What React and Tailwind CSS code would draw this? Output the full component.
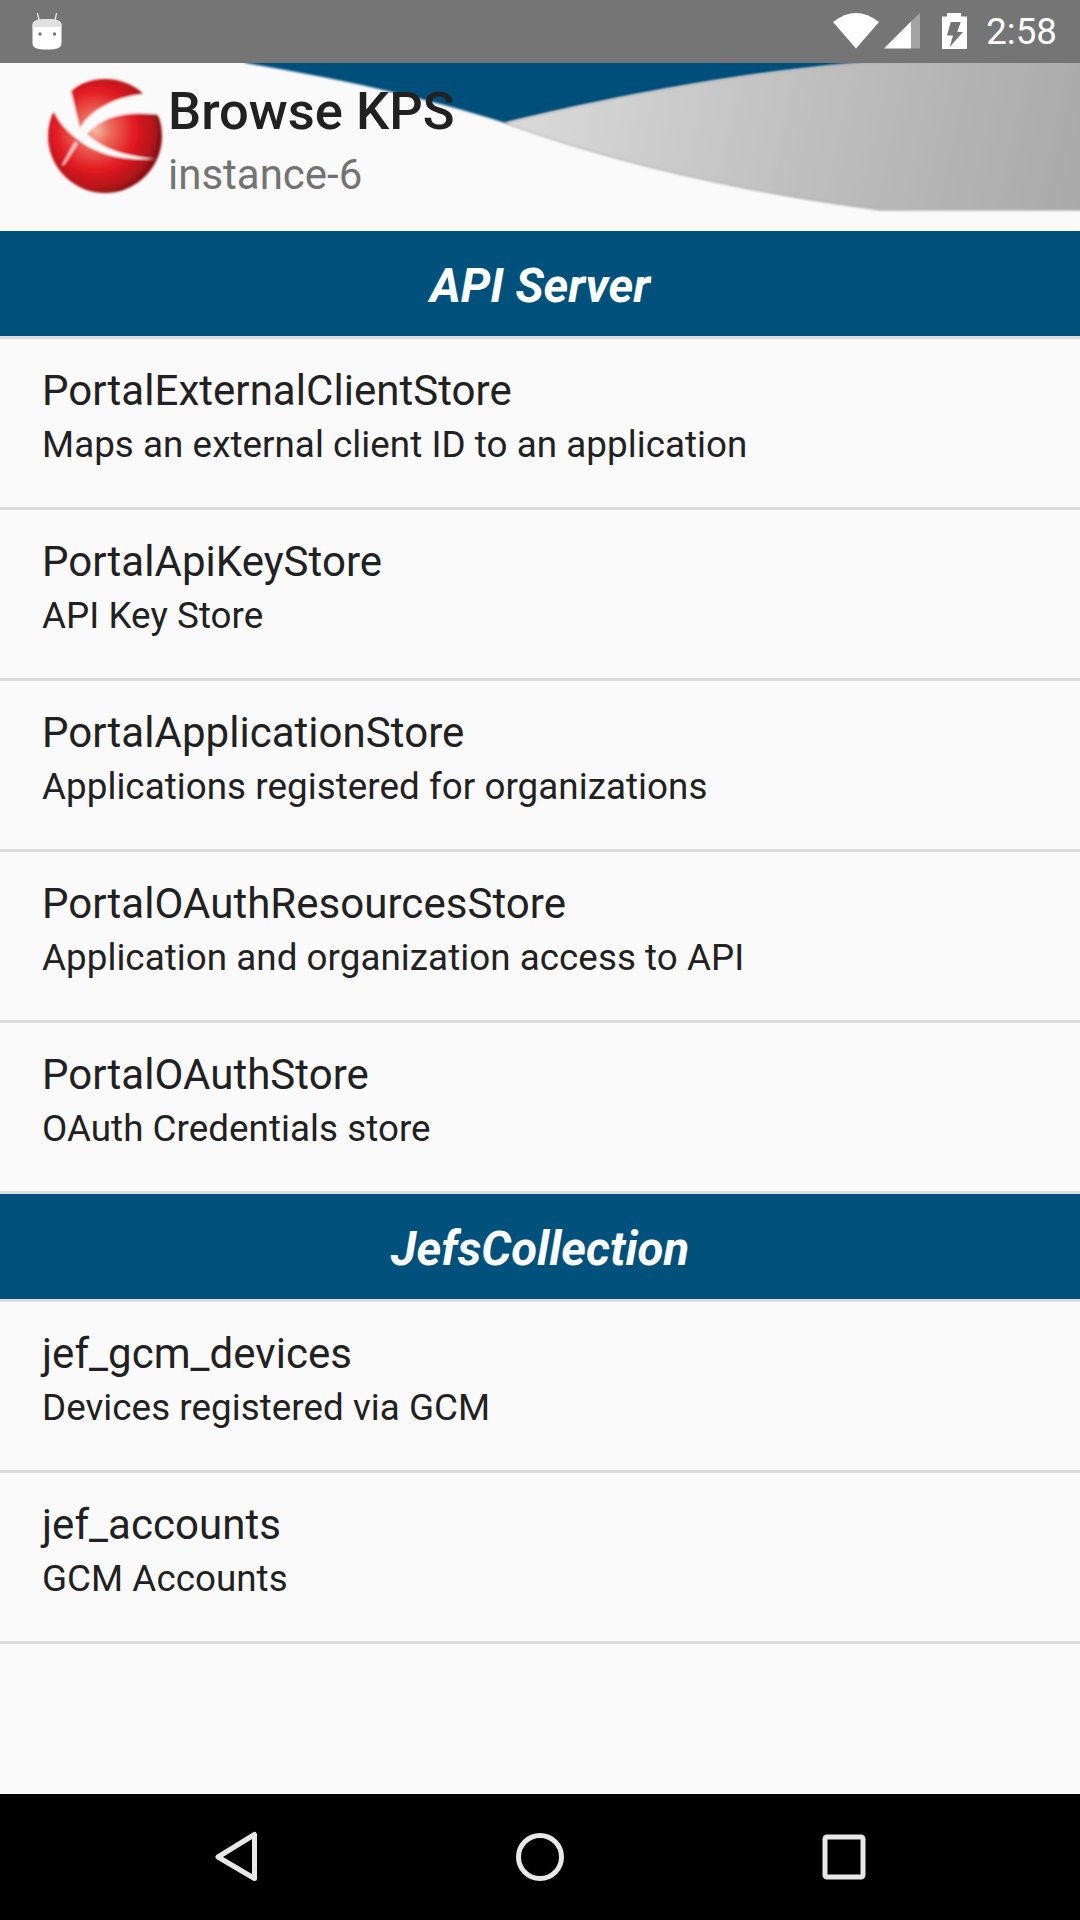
const sections = [
  {
    title: "API Server",
    items: [
      ["PortalExternalClientStore", "Maps an external client ID to an application"],
      ["PortalApiKeyStore", "API Key Store"],
      ["PortalApplicationStore", "Applications registered for organizations"],
      ["PortalOAuthResourcesStore", "Application and organization access to API"],
      ["PortalOAuthStore", "OAuth Credentials store"],
    ],
  },
  {
    title: "JefsCollection",
    items: [
      ["jef_gcm_devices", "Devices registered via GCM"],
      ["jef_accounts", "GCM Accounts"],
    ],
  },
];

function AndroidIcon() {
  return (
    <svg width="32" height="38" viewBox="0 0 32 38" className="block">
      <path d="M8 7 L6.5 0.5 M24 7 L25.5 0.5" stroke="#e4e4e4" strokeWidth="1.4" strokeLinecap="round" />
      <path d="M1.5 12 C1.5 8 6 6 16 6 C26 6 30.5 8 30.5 12 L30.5 30 C30.5 35 26 36.5 16 36.5 C6 36.5 1.5 35 1.5 30 Z" fill="#ffffff" />
      <path d="M1.5 12 C1.5 8 6 6 16 6 C26 6 30.5 8 30.5 12 L30.5 14 L1.5 14 Z" fill="#e0e0e0" />
      <circle cx="9" cy="21" r="1.7" fill="#757575" />
      <circle cx="23.5" cy="21" r="1.7" fill="#757575" />
    </svg>
  );
}

function StatusIcons() {
  return (
    <svg width="136" height="38" viewBox="0 0 136 38" className="block">
      {/* wifi */}
      <path d="M1 9 Q24 -9 47 9 L24 35.5 Z" fill="#ffffff" />
      {/* signal */}
      <path d="M52 35.5 L79 8.5 L79 35.5 Z" fill="#ffffff" />
      <path d="M79 8.5 L88 0 L88 35.5 L79 35.5 Z" fill="#a3a3a3" />
      {/* battery */}
      <path
        fillRule="evenodd"
        fill="#ffffff"
        d="M115 0 H129 V3.5 H135 V36 H110 V3.5 H115 Z M118.7 9 L115 22.5 H121 L117.7 34 L131 19 H125.3 L128.7 9 Z"
      />
    </svg>
  );
}

function Wave() {
  return (
    <svg className="absolute inset-0 h-full w-full" viewBox="0 0 1080 168" preserveAspectRatio="none">
      <defs>
        <linearGradient id="waveGray" gradientUnits="userSpaceOnUse" x1="520" y1="30" x2="1080" y2="150">
          <stop offset="0" stopColor="#dadada" />
          <stop offset="0.5" stopColor="#bfbfbf" />
          <stop offset="1" stopColor="#a9a9a9" />
        </linearGradient>
        <filter id="waveSoft" x="-2%" y="-5%" width="104%" height="110%">
          <feGaussianBlur stdDeviation="0.8" />
        </filter>
      </defs>
      <path d="M245 -4 L245 0 C330 14 425 34 505 60 C620 32 760 6 880 -1 L880 -4 Z" fill="#00507a" filter="url(#waveSoft)" />
      <path
        d="M505 60 C620 32 760 6 880 -1 L1084 -4 L1084 147 L880 147 C750 130 620 102 505 60 Z"
        fill="url(#waveGray)"
        stroke="#a0a0a0"
        strokeWidth="1"
        filter="url(#waveSoft)"
      />
    </svg>
  );
}

function Logo() {
  return (
    <svg width="120" height="120" viewBox="15 12 120 120" className="-mt-[3px] block shrink-0">
      <defs>
        <radialGradient id="ball" gradientUnits="userSpaceOnUse" cx="65" cy="66" r="72">
          <stop offset="0" stopColor="#f6b8a6" />
          <stop offset="0.22" stopColor="#ec6a5c" />
          <stop offset="0.55" stopColor="#e31b23" />
          <stop offset="0.8" stopColor="#b5141a" />
          <stop offset="1" stopColor="#6e0d10" />
        </radialGradient>
        <filter id="logoSoft" x="-5%" y="-5%" width="110%" height="110%">
          <feGaussianBlur stdDeviation="0.8" />
        </filter>
      </defs>
      <g filter="url(#logoSoft)">
        <circle cx="75" cy="72" r="57" fill="url(#ball)" />
        <path d="M50 64 C60 46 85 33 113 30 L140 10 L140 52 C100 46 75 50 57 70 Z" fill="#fafafa" />
        <path d="M14 44 L24 48 C30 60 38 68 47 75 C65 90 92 97 126 95 C95 92 75 86 57 70 L50 64 L41 27 L60 8 L14 8 Z" fill="#fafafa" />
        <path d="M45 77 L32 101 L34 101 L48 80 Z" fill="#f2c4c4" />
      </g>
    </svg>
  );
}

function Row({ name, description }) {
  return (
    <div className="h-[171px] border-b-[3px] border-[#dcdcdc] px-[42px] pt-[24px] text-[#212121]">
      <div className="text-[42px] leading-[56px] tracking-[0.04px]">{name}</div>
      <div className="mt-[2px] text-[36.75px] leading-[48px] tracking-[0.05px]">{description}</div>
    </div>
  );
}

export default function App() {
  return (
    <div className="flex h-[1920px] w-[1080px] flex-col overflow-hidden bg-[#fafafa] font-['Roboto',sans-serif]">
      <div className="flex h-[63px] shrink-0 items-center justify-between bg-[#757575] pl-[31px] pr-[23px]">
        <AndroidIcon />
        <div className="flex items-center gap-[18px]">
          <StatusIcons />
          <span className="text-[36.75px] leading-[63px] text-white">2:58</span>
        </div>
      </div>

      <div className="relative flex h-[168px] shrink-0 items-start pl-[45px] pt-[16px]">
        <Wave />
        <div className="relative mr-[3px]">
          <Logo />
        </div>
        <div className="relative">
          <div className="text-[52.5px] font-medium leading-[64px] text-[#212121]">Browse KPS</div>
          <div className="mt-[4px] text-[42px] leading-[56px] text-[#737373]">instance-6</div>
        </div>
      </div>

      <div className="flex-1">
        {sections.map((section) => (
          <div key={section.title}>
            <div className="flex h-[108px] items-center justify-center border-b-[3px] border-[#dcdcdc] bg-[#00527c] pt-[7px]">
              <span className="text-[47.25px] font-bold italic leading-none text-white">{section.title}</span>
            </div>
            {section.items.map(([name, description]) => (
              <Row key={name} name={name} description={description} />
            ))}
          </div>
        ))}
      </div>

      <div className="flex h-[126px] shrink-0 items-center justify-center gap-[256px] bg-black">
        <svg width="48" height="52" viewBox="0 0 48 52" className="block">
          <path d="M42.5 3.5 L42.5 47.5 L6 26 Z" fill="none" stroke="#e8e8e8" strokeWidth="5" strokeLinejoin="round" />
        </svg>
        <svg width="48" height="52" viewBox="0 0 48 52" className="block">
          <circle cx="24" cy="26" r="21.5" fill="none" stroke="#e8e8e8" strokeWidth="5" />
        </svg>
        <svg width="48" height="52" viewBox="0 0 48 52" className="block">
          <rect x="5" y="6" width="38" height="40" rx="2" fill="none" stroke="#e8e8e8" strokeWidth="5" />
        </svg>
      </div>
    </div>
  );
}
